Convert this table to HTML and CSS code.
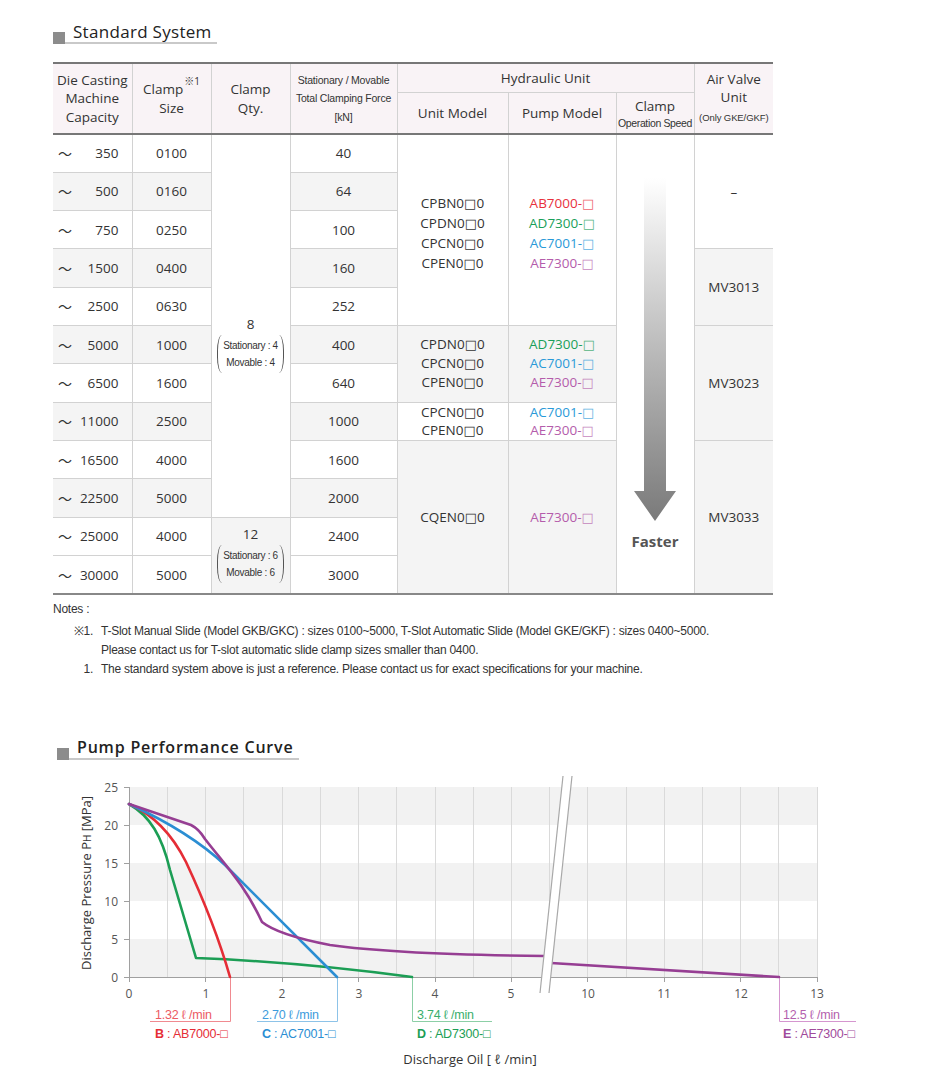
FILE: index.html
```html
<!DOCTYPE html>
<html lang="en">
<head>
<meta charset="utf-8">
<title>Standard System</title>
<link rel="stylesheet" href="styles.css">
</head>
<body>
<div class="page">
  <div class="sec-title t1"><span class="sq"></span><h2>Standard System</h2></div>

  <table class="spec">
    <colgroup>
      <col style="width:79px"><col style="width:79px"><col style="width:79px"><col style="width:107px">
      <col style="width:111px"><col style="width:108px"><col style="width:78px"><col style="width:79px">
    </colgroup>
    <thead>
      <tr class="h1">
        <th rowspan="2">Die Casting<br>Machine<br>Capacity</th>
        <th rowspan="2"><span class="sup-wrap">Clamp<sup>※1</sup></span><br>Size</th>
        <th rowspan="2">Clamp<br>Qty.</th>
        <th rowspan="2" class="sm">Stationary / Movable<br>Total Clamping Force<br>[kN]</th>
        <th colspan="3" class="hu">Hydraulic Unit</th>
        <th rowspan="2">Air Valve<br>Unit<br><span class="xs">(Only GKE/GKF)</span></th>
      </tr>
      <tr class="h2">
        <th>Unit Model</th>
        <th>Pump Model</th>
        <th class="spd">Clamp<br><span class="sm2">Operation Speed</span></th>
      </tr>
    </thead>
    <tbody>
      <tr>
        <td><div class="cap"><span class="tl">～</span><span>350</span></div></td>
        <td>0100</td>
        <td rowspan="10" class="qty q8"><div class="qn">8</div><div class="par"><span class="pl"></span><span class="pt">Stationary : 4<br>Movable : 4</span><span class="pr"></span></div></td>
        <td>40</td>
        <td rowspan="5" class="lines l4">CPBN0<span class="bx">□</span>0<br>CPDN0<span class="bx">□</span>0<br>CPCN0<span class="bx">□</span>0<br>CPEN0<span class="bx">□</span>0</td>
        <td rowspan="5" class="lines l4"><span class="r">AB7000-<span class="bx">□</span></span><br><span class="gn">AD7300-<span class="bx">□</span></span><br><span class="bl">AC7001-<span class="bx">□</span></span><br><span class="pu">AE7300-<span class="bx">□</span></span></td>
        <td rowspan="12" class="speed">
          <svg class="arrow" width="42" height="343" viewBox="0 0 42 343" aria-hidden="true">
            <defs>
              <linearGradient id="ag" x1="0" y1="0" x2="0" y2="1">
                <stop offset="0" stop-color="#ffffff"/>
                <stop offset="0.55" stop-color="#b4b4b4"/>
                <stop offset="1" stop-color="#7a7a7a"/>
              </linearGradient>
            </defs>
            <polygon points="10,0 32,0 32,313 42,313 21,343 0,313 10,313" fill="url(#ag)"/>
          </svg>
          <div class="faster">Faster</div>
        </td>
        <td rowspan="3">–</td>
      </tr>
      <tr class="g">
        <td><div class="cap"><span class="tl">～</span><span>500</span></div></td>
        <td>0160</td>
        <td>64</td>
      </tr>
      <tr>
        <td><div class="cap"><span class="tl">～</span><span>750</span></div></td>
        <td>0250</td>
        <td>100</td>
      </tr>
      <tr class="g">
        <td><div class="cap"><span class="tl">～</span><span>1500</span></div></td>
        <td>0400</td>
        <td>160</td>
        <td rowspan="2" class="gc">MV3013</td>
      </tr>
      <tr>
        <td><div class="cap"><span class="tl">～</span><span>2500</span></div></td>
        <td>0630</td>
        <td>252</td>
      </tr>
      <tr class="g">
        <td><div class="cap"><span class="tl">～</span><span>5000</span></div></td>
        <td>1000</td>
        <td>400</td>
        <td rowspan="2" class="lines l3 gc">CPDN0<span class="bx">□</span>0<br>CPCN0<span class="bx">□</span>0<br>CPEN0<span class="bx">□</span>0</td>
        <td rowspan="2" class="lines l3 gc"><span class="gn">AD7300-<span class="bx">□</span></span><br><span class="bl">AC7001-<span class="bx">□</span></span><br><span class="pu">AE7300-<span class="bx">□</span></span></td>
        <td rowspan="3">MV3023</td>
      </tr>
      <tr>
        <td><div class="cap"><span class="tl">～</span><span>6500</span></div></td>
        <td>1600</td>
        <td>640</td>
      </tr>
      <tr class="g">
        <td><div class="cap"><span class="tl">～</span><span>11000</span></div></td>
        <td>2500</td>
        <td>1000</td>
        <td class="lines l2 wc">CPCN0<span class="bx">□</span>0<br>CPEN0<span class="bx">□</span>0</td>
        <td class="lines l2 wc"><span class="bl">AC7001-<span class="bx">□</span></span><br><span class="pu">AE7300-<span class="bx">□</span></span></td>
      </tr>
      <tr>
        <td><div class="cap"><span class="tl">～</span><span>16500</span></div></td>
        <td>4000</td>
        <td>1600</td>
        <td rowspan="4" class="gc">CQEN0<span class="bx">□</span>0</td>
        <td rowspan="4" class="gc"><span class="pu">AE7300-<span class="bx">□</span></span></td>
        <td rowspan="4" class="gc">MV3033</td>
      </tr>
      <tr class="g">
        <td><div class="cap"><span class="tl">～</span><span>22500</span></div></td>
        <td>5000</td>
        <td>2000</td>
      </tr>
      <tr>
        <td><div class="cap"><span class="tl">～</span><span>25000</span></div></td>
        <td>4000</td>
        <td rowspan="2" class="qty gc"><div class="qn">12</div><div class="par"><span class="pl"></span><span class="pt">Stationary : 6<br>Movable : 6</span><span class="pr"></span></div></td>
        <td>2400</td>
      </tr>
      <tr>
        <td><div class="cap"><span class="tl">～</span><span>30000</span></div></td>
        <td>5000</td>
        <td>3000</td>
      </tr>
    </tbody>
  </table>

  <div class="notes">
    <div class="nh">Notes :</div>
    <div class="nt first"><span class="nk">※1.</span><span class="nv">T-Slot Manual Slide (Model GKB/GKC) : sizes 0100~5000, T-Slot Automatic Slide (Model GKE/GKF) : sizes 0400~5000.<br>Please contact us for T-slot automatic slide clamp sizes smaller than 0400.</span></div>
    <div class="nt"><span class="nk">1.</span><span class="nv">The standard system above is just a reference. Please contact us for exact specifications for your machine.</span></div>
  </div>
</div>

<section class="chart">
  <div class="sec-title t2"><span class="sq"></span><h2>Pump Performance Curve</h2></div>
  <svg class="plot" width="925" height="314" viewBox="0 0 925 314">
    <g transform="translate(0,-770)">
      <g fill="#f2f2f2">
        <rect x="129" y="787" width="688" height="38"/>
        <rect x="129" y="863" width="688" height="38"/>
        <rect x="129" y="939" width="688" height="38"/>
      </g>
      <g stroke="#dadada" stroke-width="1">
        <line x1="167.5" y1="787" x2="167.5" y2="977"/>
        <line x1="205.5" y1="787" x2="205.5" y2="977"/>
        <line x1="243.5" y1="787" x2="243.5" y2="977"/>
        <line x1="282.5" y1="787" x2="282.5" y2="977"/>
        <line x1="320.5" y1="787" x2="320.5" y2="977"/>
        <line x1="358.5" y1="787" x2="358.5" y2="977"/>
        <line x1="396.5" y1="787" x2="396.5" y2="977"/>
        <line x1="435.5" y1="787" x2="435.5" y2="977"/>
        <line x1="473.5" y1="787" x2="473.5" y2="977"/>
        <line x1="511.5" y1="787" x2="511.5" y2="977"/>
        <line x1="549.5" y1="787" x2="549.5" y2="977"/>
        <line x1="587.5" y1="787" x2="587.5" y2="977"/>
        <line x1="626.5" y1="787" x2="626.5" y2="977"/>
        <line x1="664.5" y1="787" x2="664.5" y2="977"/>
        <line x1="702.5" y1="787" x2="702.5" y2="977"/>
        <line x1="740.5" y1="787" x2="740.5" y2="977"/>
        <line x1="778.5" y1="787" x2="778.5" y2="977"/>
        <line x1="817.5" y1="787" x2="817.5" y2="977"/>
      </g>
      <g stroke="#a0a0a0" stroke-width="1" fill="none">
        <line x1="129.5" y1="787" x2="129.5" y2="977"/>
        <line x1="124" y1="977.5" x2="818" y2="977.5"/>
        <line x1="124" y1="787.5" x2="129" y2="787.5"/>
        <line x1="124" y1="825.5" x2="129" y2="825.5"/>
        <line x1="124" y1="863.5" x2="129" y2="863.5"/>
        <line x1="124" y1="901.5" x2="129" y2="901.5"/>
        <line x1="124" y1="939.5" x2="129" y2="939.5"/>
        <line x1="129.5" y1="977" x2="129.5" y2="982"/>
        <line x1="205.5" y1="977" x2="205.5" y2="982"/>
        <line x1="282.5" y1="977" x2="282.5" y2="982"/>
        <line x1="358.5" y1="977" x2="358.5" y2="982"/>
        <line x1="435.5" y1="977" x2="435.5" y2="982"/>
        <line x1="511.5" y1="977" x2="511.5" y2="982"/>
        <line x1="587.5" y1="977" x2="587.5" y2="982"/>
        <line x1="664.5" y1="977" x2="664.5" y2="982"/>
        <line x1="740.5" y1="977" x2="740.5" y2="982"/>
        <line x1="817.5" y1="977" x2="817.5" y2="982"/>
      </g>

      <g class="ytk" text-anchor="end">
        <text x="118" y="791.5">25</text>
        <text x="118" y="829.5">20</text>
        <text x="118" y="867.5">15</text>
        <text x="118" y="905.5">10</text>
        <text x="118" y="943.5">5</text>
        <text x="118" y="981.5">0</text>
      </g>
      <g class="ytk" text-anchor="middle">
        <text x="129" y="998">0</text>
        <text x="206" y="998">1</text>
        <text x="282" y="998">2</text>
        <text x="359" y="998">3</text>
        <text x="435" y="998">4</text>
        <text x="511" y="998">5</text>
        <text x="588" y="998">10</text>
        <text x="664" y="998">11</text>
        <text x="741" y="998">12</text>
        <text x="817" y="998">13</text>
      </g>

      <g fill="none" stroke-width="1">
        <path d="M230.5,977 V1021.5 H150" stroke="#f08a90"/>
        <path d="M337.5,977 V1021.5 H257" stroke="#8dc3e8"/>
        <path d="M412.5,977 V1021.5 H492" stroke="#8ccfa6"/>
        <path d="M779.5,977 V1021.5 H856" stroke="#d596cf"/>
      </g>

      <g fill="none" stroke-width="2.6" stroke-linejoin="round" stroke-linecap="round">
        <path d="M129,804 C150,816 162,836 170,870 L196,958 Q300,962 412,977" stroke="#1c9e55"/>
        <path d="M129,804 C152,814 172,834 186,862 C200,892 218,935 230,977" stroke="#e52d36"/>
        <path d="M129,804 Q190,832 225,865 L337,977" stroke="#2b8ed3"/>
        <path d="M129,804 L191,825 Q199,829 205,839 C225,865 245,885 262,922 Q278,935 330,945 C380,952 450,955 545,956" stroke="#963e93"/>
        <path d="M551,963 L779,977" stroke="#963e93"/>
      </g>

      <polygon points="563,776 572,776 549,993 540,993" fill="#ffffff"/>
      <g stroke="#a8a8a8" stroke-width="1.2">
        <line x1="563" y1="776" x2="540" y2="993"/>
        <line x1="572" y1="776" x2="549" y2="993"/>
      </g>

      <g class="dl">
        <text x="155" y="1019" fill="#ec5a63">1.32 ℓ /min</text>
        <text x="155" y="1038" fill="#e52d36"><tspan font-weight="bold">B</tspan> : AB7000-□</text>
        <text x="262" y="1019" fill="#3d9bdc">2.70 ℓ /min</text>
        <text x="262" y="1038" fill="#2b8ed3"><tspan font-weight="bold">C</tspan> : AC7001-□</text>
        <text x="417" y="1019" fill="#3aae6c">3.74 ℓ /min</text>
        <text x="417" y="1038" fill="#1c9e55"><tspan font-weight="bold">D</tspan> : AD7300-□</text>
        <text x="783" y="1019" fill="#b45fae">12.5 ℓ /min</text>
        <text x="783" y="1038" fill="#a04a9b"><tspan font-weight="bold">E</tspan> : AE7300-□</text>
      </g>

      <text class="axl" x="470" y="1064" text-anchor="middle">Discharge Oil [ ℓ /min]</text>
      <text class="axl" transform="translate(91,883) rotate(-90)" text-anchor="middle">Discharge Pressure P<tspan font-size="10">H</tspan> [MPa]</text>
    </g>
  </svg>
</section>
</body>
</html>
```

FILE: styles.css
```css
* { box-sizing: border-box; }

body {
  margin: 0;
  font-family: "Open Sans", "Noto Sans CJK JP", sans-serif;
  color: #333;
  background: #fff;
}

.page {
  padding-left: 53px;
  width: 925px;
}

/* section titles */
.sec-title {
  display: flex;
  align-items: flex-end;
}
.sec-title .sq {
  width: 12px;
  height: 12px;
  background: #8c8c8c;
  flex: none;
}
.sec-title h2 {
  margin: 0;
  color: #222;
  border-bottom: 2px solid #c9c9c9;
  line-height: 21px;
}
.t1 { margin-top: 21px; }
.t1 h2 {
  font-size: 17px;
  font-weight: 500;
  letter-spacing: 0.3px;
  padding: 0 5px 0 8px;
}
.t2 {
  margin-left: 57px;
  margin-top: 58px;
}
.t2 h2 {
  font-size: 16px;
  font-weight: 600;
  letter-spacing: 0.8px;
  padding: 0 6px 0 8px;
}

/* spec table */
.spec {
  margin-top: 18px;
  width: 720px;
  border-collapse: collapse;
  table-layout: fixed;
  font-size: 13.5px;
  border-top: 2px solid #777;
  border-bottom: 2px solid #888;
  border-left: 1px hidden;
  border-right: 1px hidden;
}
.spec th,
.spec td {
  border: 1px solid #d2d2d2;
  text-align: center;
  vertical-align: middle;
  padding: 0;
  font-weight: normal;
  color: #333;
}
.spec thead th {
  background: #f9f3f6;
  line-height: 18.5px;
  border-bottom: 2px solid #777;
  white-space: nowrap;
}
.spec thead th.hu {
  border-bottom: 1px solid #d2d2d2;
}
.spec tr.h1 { height: 29px; }
.spec tr.h2 { height: 42px; }
.spec tbody tr { height: 38.33px; }

.spec tr.g > td { background: #f4f4f4; }
.spec tr > td.gc { background: #f4f4f4; }
.spec tr > td.wc { background: #fff; }
.spec tr > td.qty.q8 { background: #fff; }
.spec td.speed { background: #fff; }

.sup-wrap sup {
  font-size: 10px;
  vertical-align: 9px;
  line-height: 0;
  margin-left: 1px;
}

.sm {
  font-family: "Liberation Sans", sans-serif;
  font-size: 10.5px;
  letter-spacing: -0.2px;
}
.sm2 {
  font-family: "Liberation Sans", sans-serif;
  font-size: 10.5px;
  letter-spacing: -0.35px;
  display: block;
  line-height: 16px;
  white-space: nowrap;
}
.spd { line-height: 18px !important; padding-top: 3px !important; }
.xs {
  font-family: "Liberation Sans", sans-serif;
  font-size: 9.5px;
  letter-spacing: -0.1px;
  white-space: nowrap;
}

.cap {
  display: flex;
  justify-content: space-between;
  align-items: center;
  padding: 0 13px 0 5px;
}
.tl {
  font-family: "Noto Sans CJK JP", sans-serif;
  font-size: 14px;
  line-height: 1;
}

.qty { vertical-align: middle; }
.q8 { padding-top: 40px !important; }
.qn { line-height: 20px; }
.par {
  display: inline-flex;
  align-items: stretch;
  margin-top: 1px;
}
.pl, .pr {
  width: 5px;
  flex: none;
}
.pl {
  border-left: 1px solid #555;
  border-radius: 6px 0 0 6px / 50% 0 0 50%;
}
.pr {
  border-right: 1px solid #555;
  border-radius: 0 6px 6px 0 / 0 50% 50% 0;
}
.pt {
  font-family: "Liberation Sans", sans-serif;
  font-size: 10px;
  letter-spacing: -0.3px;
  line-height: 17px;
  padding: 2px 1px;
  white-space: nowrap;
}

.lines { white-space: nowrap; }
.lines.l4 { line-height: 20px; padding-top: 6px; }
.lines.l3 { line-height: 19px; }
.lines.l2 { line-height: 18px; }

.bx {
  font-family: "DejaVu Sans", sans-serif;
  font-size: 13px;
  font-weight: normal;
  line-height: 0;
}
.r { color: #e8313d; }
.gn { color: #19a05a; }
.bl { color: #2a9ad8; }
.pu { color: #b45cab; }
.r .bx, .gn .bx, .bl .bx, .pu .bx { opacity: 0.75; }

.speed {
  vertical-align: top !important;
  padding-top: 43px !important;
}
.arrow { display: block; margin: 0 auto; }
.faster {
  margin-top: 10px;
  font-weight: 700;
  font-size: 15px;
  line-height: 20px;
  color: #555;
}

/* notes */
.notes {
  margin-top: 5px;
  font-family: "Liberation Sans", sans-serif;
  font-size: 12px;
  letter-spacing: -0.25px;
  line-height: 19px;
  color: #333;
}
.nt { display: flex; }
.nt.first { margin-top: 3px; }
.nk {
  width: 48px;
  flex: none;
  text-align: right;
  padding-right: 8px;
}
.nv { white-space: nowrap; }

/* chart */
.plot {
  display: block;
  margin-top: 10px;
}
.ytk {
  font-family: "Open Sans", sans-serif;
  font-size: 12px;
  fill: #555;
}
.dl {
  font-family: "Liberation Sans", sans-serif;
  font-size: 12.5px;
  letter-spacing: -0.2px;
}
.axl {
  font-family: "Open Sans", sans-serif;
  font-size: 13px;
  fill: #333;
}
```
